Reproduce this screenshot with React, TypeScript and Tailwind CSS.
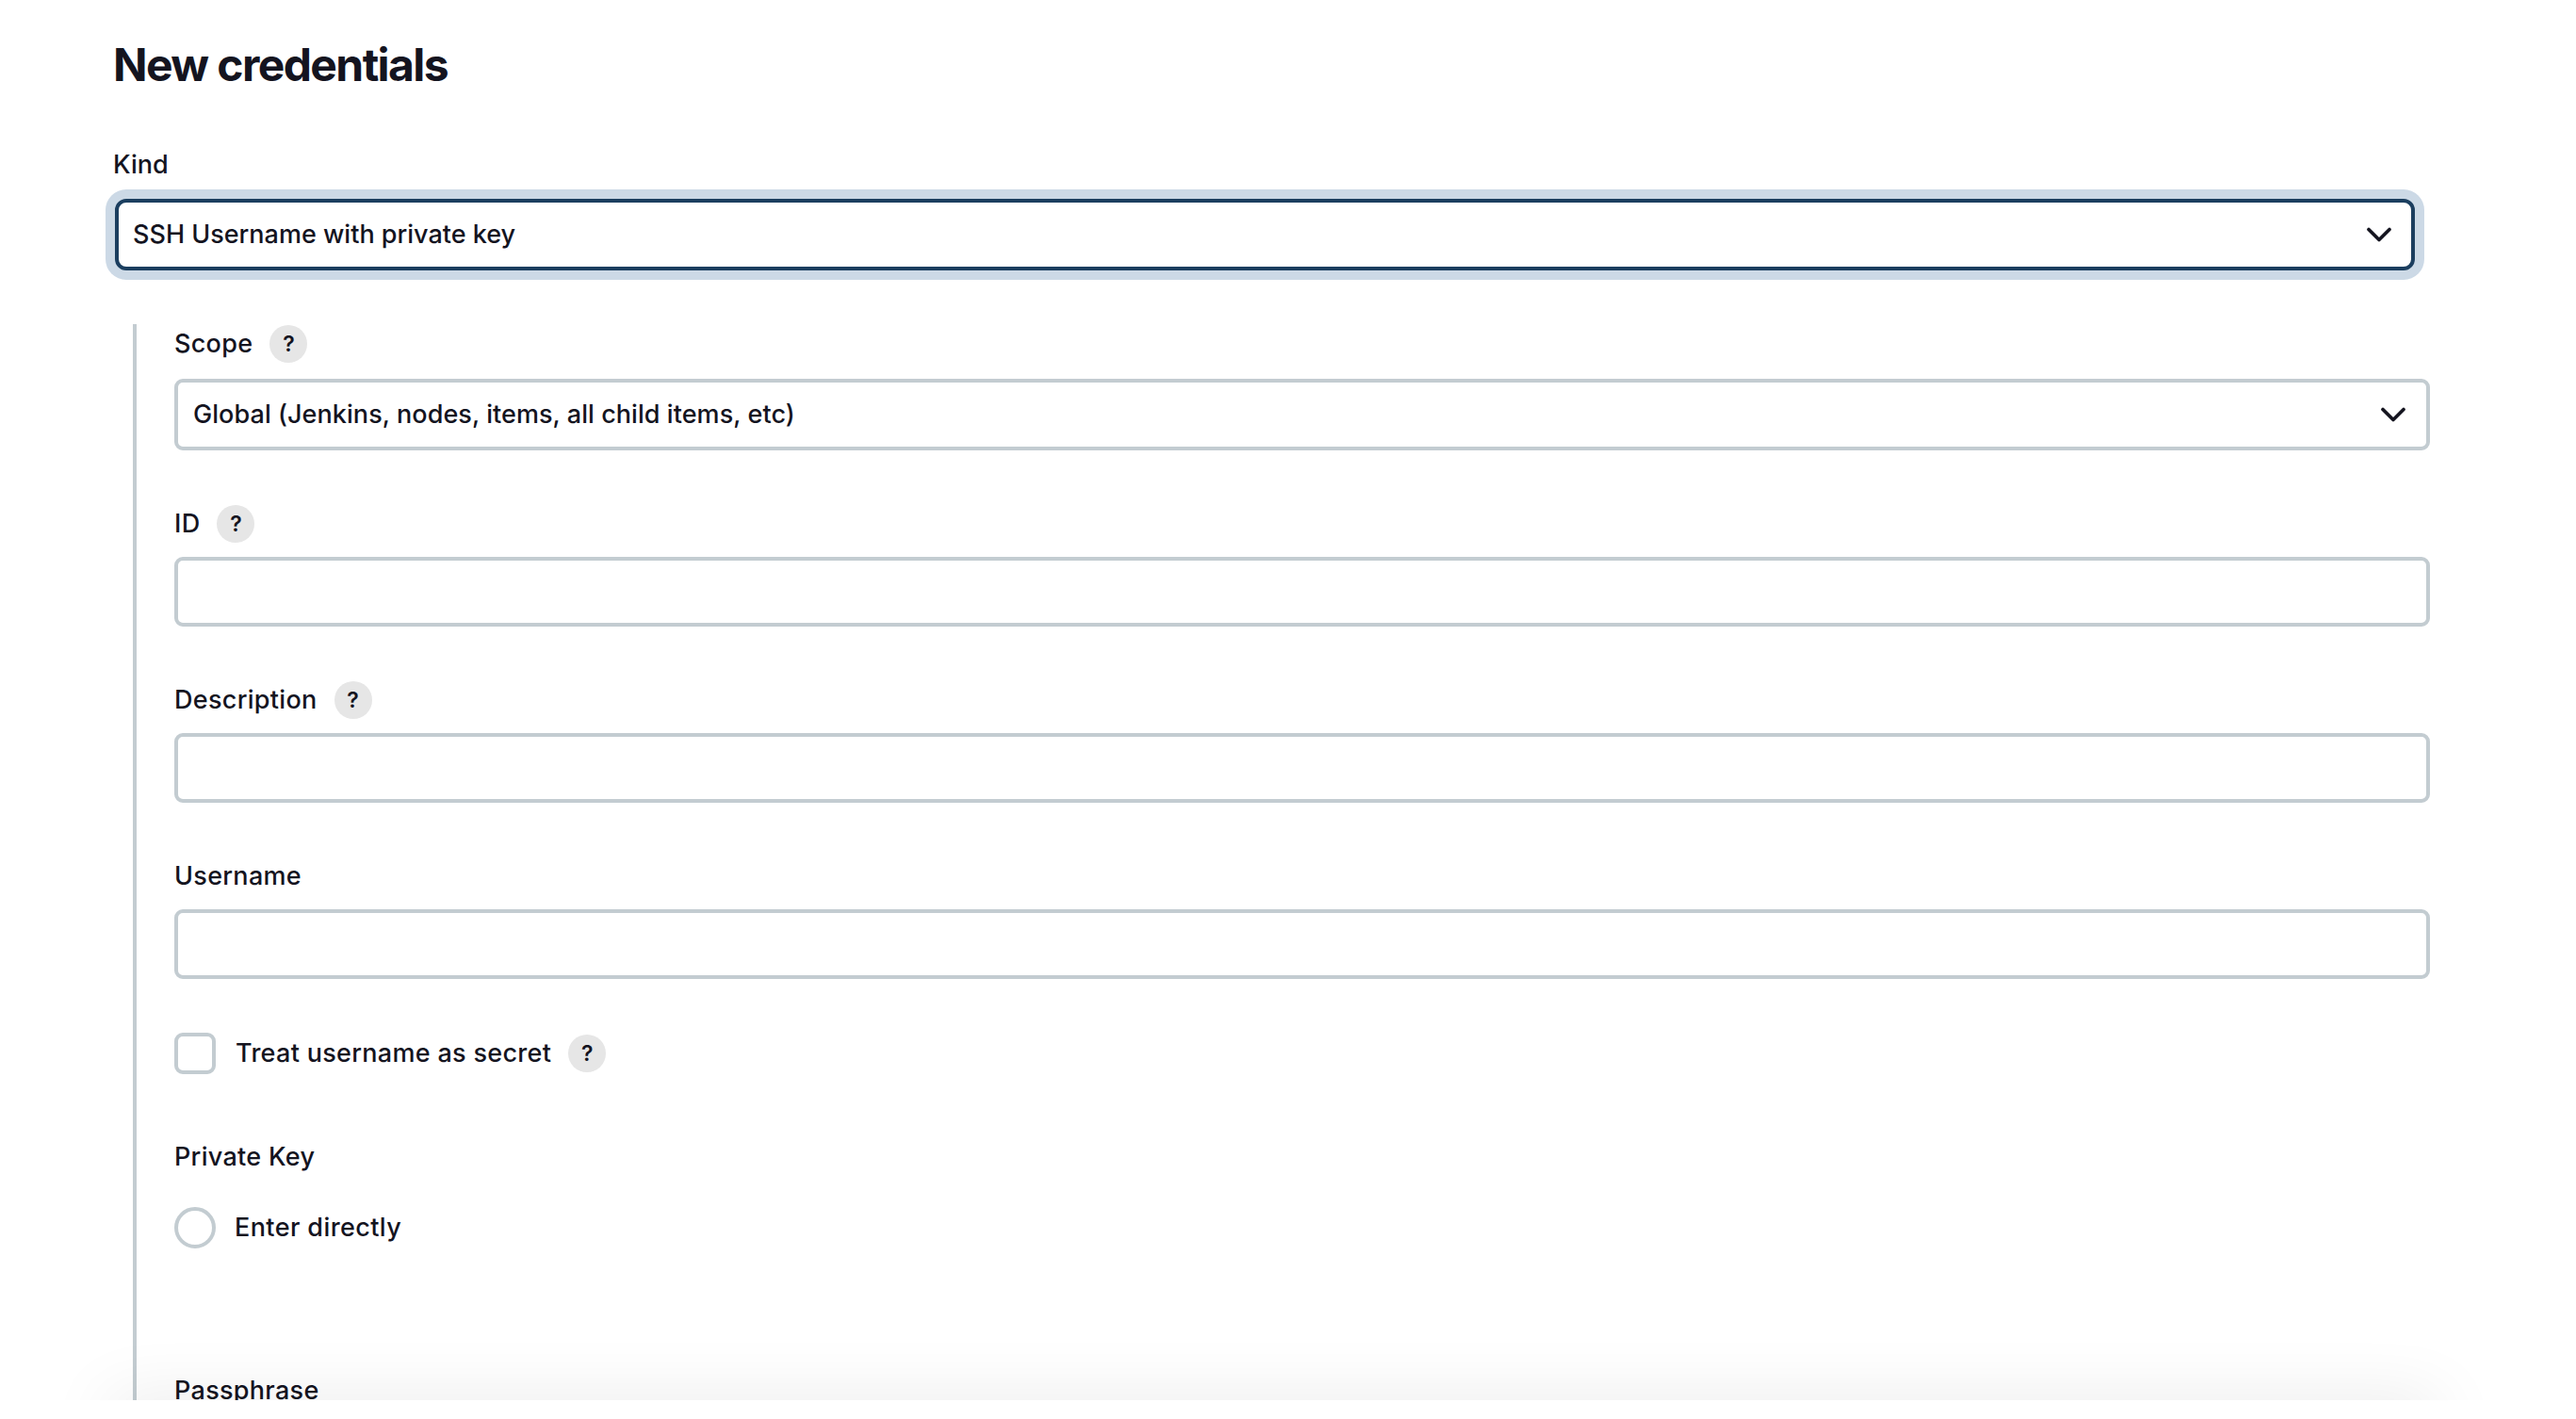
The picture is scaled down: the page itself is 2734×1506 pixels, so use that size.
import { ChevronDown } from 'lucide-react';

function Help() {
  return (
    <span className="ml-[18px] flex h-10 w-10 items-center justify-center rounded-full bg-[#e6e6e6] text-[23px] font-semibold leading-none tracking-normal">
      ?
    </span>
  );
}

function Label({ text, help }: { text: string; help?: boolean }) {
  return (
    <div className="flex h-10 items-center text-[27px] font-medium tracking-[0.3px]">
      <span>{text}</span>
      {help && <Help />}
    </div>
  );
}

function TextInput() {
  return <div className="h-[74px] rounded-[9px] border-4 border-[#c3ccd1] bg-white" />;
}

export default function App() {
  return (
    <div className="h-[1506px] w-full overflow-hidden bg-white font-['Inter',sans-serif] text-[#14141f]">
      <div className="relative h-[1486px] overflow-hidden pl-[122px]">
        <h1 className="-ml-[2px] pt-[39px] text-[48px] font-bold leading-[60px] tracking-[-1.6px]">New credentials</h1>

        <div className="-ml-[2px] mt-[56px] text-[27px] font-medium leading-10">Kind</div>
        <div className="mt-[16px] flex h-[76px] w-[2441px] items-center justify-between rounded-[12px] border-4 border-[#1b3e5f] bg-white pl-[15px] pr-[12px] text-[27px] font-medium shadow-[0_0_0_10px_#ccd9e6]">
          <span className="pt-px">SSH Username with private key</span>
          <ChevronDown className="h-11 w-11 text-[#14141f]" strokeWidth={2} />
        </div>

        <div className="ml-[19px] mt-[57px] w-[2438px] border-l-4 border-[#c3ccd1] pl-[40px] pt-px">
          <Label text="Scope" help />
          <div className="mt-[17px] flex h-[76px] items-center justify-between rounded-[9px] border-4 border-[#c3ccd1] bg-white pl-[16px] pr-[13px] text-[27px] font-medium tracking-[0.06px]">
            <span>Global (Jenkins, nodes, items, all child items, etc)</span>
            <ChevronDown className="h-11 w-11 text-[#14141f]" strokeWidth={2} />
          </div>

          <div className="mt-[58px]">
            <Label text="ID" help />
          </div>
          <div className="mt-[15px]">
            <TextInput />
          </div>

          <div className="mt-[58px]">
            <Label text="Description" help />
          </div>
          <div className="mt-[15px]">
            <TextInput />
          </div>

          <div className="mt-[58px]">
            <Label text="Username" />
          </div>
          <div className="mt-[15px]">
            <TextInput />
          </div>

          <div className="mt-[57px] flex h-11 items-center text-[27px] font-medium tracking-[0.3px]">
            <span className="h-11 w-11 rounded-[9px] border-4 border-[#c3ccd1] bg-white" />
            <span className="ml-[21px]">Treat username as secret</span>
            <Help />
          </div>

          <div className="mt-[68px]">
            <Label text="Private Key" />
          </div>
          <div className="mt-[33px] flex h-11 items-center text-[27px] font-medium tracking-[0.4px]">
            <span className="h-11 w-11 rounded-full border-4 border-[#c3ccd1] bg-white" />
            <span className="ml-[20px]">Enter directly</span>
          </div>

          <div className="mt-[131px]">
            <Label text="Passphrase" />
          </div>
          <div className="h-[200px]" />
        </div>

        {/* shadow thrown up by the sticky bottom bar, its body is cut off */}
        <div className="absolute left-[115px] right-[145px] top-[1486px] h-10 shadow-[0_0_70px_rgba(0,0,0,0.1)]" />
      </div>
    </div>
  );
}
